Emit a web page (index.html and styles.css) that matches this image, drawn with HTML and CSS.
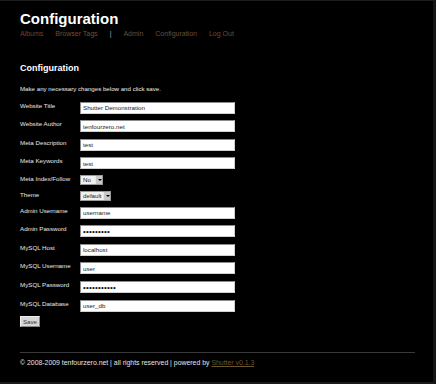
FILE: index.html
```html
<!DOCTYPE html>
<html>
<head>
<meta charset="utf-8">
<title>Configuration</title>
<link rel="stylesheet" href="styles.css">
</head>
<body>
<div class="page">
  <header class="site-header">
    <h1 class="site-title">Configuration</h1>
    <nav class="nav">
      <a class="nav-link nav-albums" href="#">Albums</a>
      <a class="nav-link nav-tags" href="#">Browser Tags</a>
      <span class="nav-sep">|</span>
      <a class="nav-link" href="#">Admin</a>
      <a class="nav-link" href="#">Configuration</a>
      <a class="nav-link" href="#">Log Out</a>
    </nav>
  </header>
  <main class="content">
    <h2 class="section-title">Configuration</h2>
    <p class="intro">Make any necessary changes below and click save.</p>
    <form class="config-form">
      <div class="row"><label class="label">Website Title</label><input class="field" type="text" value="Shutter Demonstration"></div>
      <div class="row"><label class="label">Website Author</label><input class="field" type="text" value="tenfourzero.net"></div>
      <div class="row"><label class="label">Meta Description</label><input class="field" type="text" value="test"></div>
      <div class="row row-tight"><label class="label">Meta Keywords</label><input class="field" type="text" value="test"></div>
      <div class="row row-select"><label class="label">Meta Index/Follow</label>
        <div class="select-wrap select-no"><select class="select"><option>No</option></select><span class="select-arrow"></span></div>
      </div>
      <div class="row row-select"><label class="label">Theme</label>
        <div class="select-wrap select-theme"><select class="select"><option>default</option></select><span class="select-arrow"></span></div>
      </div>
      <div class="row"><label class="label">Admin Username</label><input class="field" type="text" value="username"></div>
      <div class="row"><label class="label">Admin Password</label><input class="field field-pass" type="password" value="password1"></div>
      <div class="row"><label class="label">MySQL Host</label><input class="field" type="text" value="localhost"></div>
      <div class="row"><label class="label">MySQL Username</label><input class="field" type="text" value="user"></div>
      <div class="row"><label class="label">MySQL Password</label><input class="field field-pass" type="password" value="password123"></div>
      <div class="row row-last"><label class="label">MySQL Database</label><input class="field" type="text" value="user_db"></div>
      <button class="save" type="button">Save</button>
    </form>
  </main>
  <footer class="footer">
    <hr class="footer-rule">
    <p class="footer-text">© 2008-2009 tenfourzero.net | all rights reserved | powered by <a class="footer-link" href="#">Shutter v0.1.3</a></p>
  </footer>
</div>
</body>
</html>
```

FILE: styles.css
```css
* { box-sizing: border-box; }
html, body { margin: 0; padding: 0; background: #000; }
body {
  font-family: "Liberation Sans", Arial, sans-serif;
  color: #fff;
  height: 384px;
  overflow: hidden;
}
.page {
  width: 436px;
  height: 384px;
  border-top: 1px solid #1c1c1c;
  border-right: 3px solid #141414;
  border-bottom: 2px solid #1a1a1a;
  padding: 10.3px 0 0 20px;
  background: #000;
}
.site-title {
  margin: 0;
  font-size: 15px;
  line-height: 15px;
  font-weight: bold;
  color: #fff;
}
.nav {
  display: flex;
  gap: 12px;
  margin-top: 3.3px;
  font-size: 7px;
  line-height: 8px;
}
.nav-link { color: #6e4c38; text-decoration: none; }
.nav-albums { color: #8a3a22; }
.nav-tags { color: #7e4a2c; }
.nav-sep { color: #aaa; }
.section-title {
  margin: 25.5px 0 0;
  font-size: 9px;
  line-height: 10px;
  font-weight: bold;
}
.intro {
  margin: 11.8px 0 0;
  font-size: 6.15px;
  line-height: 7px;
  color: #eee;
}
.config-form {
  margin-top: 9.8px;
  display: flex;
  flex-direction: column;
  align-items: flex-start;
}
.row {
  display: flex;
  align-items: flex-start;
  margin-bottom: 6.6px;
}
.row-tight { margin-bottom: 5.2px; }
.row-select { margin-bottom: 6px; }
.row-last { margin-bottom: 4.7px; }
.label {
  width: 60px;
  font-size: 6.2px;
  line-height: 7px;
  color: #e8e8e8;
}
.field {
  width: 155px;
  height: 12px;
  margin: 0;
  padding: 0 2px;
  border: 1px solid #8c8c8c;
  border-right-color: #d0d0d0;
  border-bottom-color: #d0d0d0;
  background: #fff;
  color: #222;
  font-family: "Liberation Sans", Arial, sans-serif;
  font-size: 6.2px;
  outline: none;
}
.field-pass { font-size: 8px; letter-spacing: 0.2px; color: #111; }
.select-wrap {
  position: relative;
  height: 10px;
}
.select-no { width: 23px; }
.select-theme { width: 31px; }
.select {
  -webkit-appearance: none;
  appearance: none;
  display: block;
  width: 100%;
  height: 10px;
  margin: 0;
  padding: 0 0 0 2px;
  border: 1px solid #999;
  border-radius: 0;
  background: #f0f0f0;
  color: #222;
  font-family: "Liberation Sans", Arial, sans-serif;
  font-size: 6.2px;
  line-height: 8px;
}
.select-arrow {
  position: absolute;
  top: 1px;
  right: 1px;
  width: 7px;
  height: 8px;
  background: #c8c8c8;
  border-left: 1px solid #e8e8e8;
}
.select-arrow::after {
  content: "";
  position: absolute;
  left: 1.5px;
  top: 3px;
  border-left: 2px solid transparent;
  border-right: 2px solid transparent;
  border-top: 2px solid #000;
}
.save {
  width: 20px;
  height: 10.6px;
  margin: 0;
  padding: 0;
  border: 1px solid #eee;
  border-right-color: #888;
  border-bottom-color: #888;
  background: #d6d6d6;
  color: #333;
  font-family: "Liberation Sans", Arial, sans-serif;
  font-size: 6.2px;
  line-height: 8px;
}
.footer-rule {
  width: 395px;
  margin: 25.4px 0 0;
  border: 0;
  height: 1px;
  background: #3a3a3a;
}
.footer-text {
  margin: 5.6px 0 0;
  font-size: 6.9px;
  line-height: 7.5px;
  color: #e6e6e6;
}
.footer-link { color: #6a5628; text-decoration: underline; }
```
